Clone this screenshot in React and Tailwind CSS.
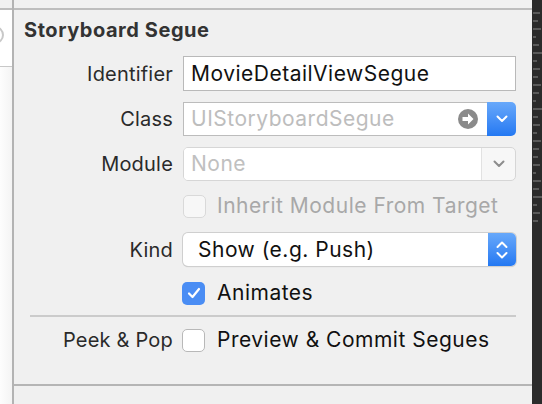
import { useState } from "react";

const font = { fontFamily: "Inter, 'Noto Sans', sans-serif" };

function ChevronDown({ className = "", color = "white" }) {
  return (
    <svg width="12" height="8" viewBox="0 0 12 8" className={className}>
      <path d="M1.5 1.5 L6 6 L10.5 1.5" fill="none" stroke={color} strokeWidth="2" strokeLinecap="round" strokeLinejoin="round" />
    </svg>
  );
}

function UpDown() {
  return (
    <svg width="12" height="20" viewBox="0 0 12 20">
      <path d="M1.5 7 L6 2.5 L10.5 7" fill="none" stroke="white" strokeWidth="2" strokeLinecap="round" strokeLinejoin="round" />
      <path d="M1.5 13 L6 17.5 L10.5 13" fill="none" stroke="white" strokeWidth="2" strokeLinecap="round" strokeLinejoin="round" />
    </svg>
  );
}

function ArrowCircle() {
  return (
    <svg width="20" height="20" viewBox="0 0 20 20">
      <circle cx="10" cy="10" r="10" fill="#8a8a8a" />
      <path d="M4.5 8 H10 V4.5 L15.5 10 L10 15.5 V12 H4.5 Z" fill="white" />
    </svg>
  );
}

function Check() {
  return (
    <svg width="16" height="14" viewBox="0 0 16 14">
      <path d="M3 7.5 L6.5 11 L13 3" fill="none" stroke="white" strokeWidth="2.2" strokeLinecap="round" strokeLinejoin="round" />
    </svg>
  );
}

function Row({ label, children, className = "" }) {
  return (
    <div className={`flex items-center ${className}`}>
      <div className="w-[159px] text-right text-[20px] tracking-[0.2px] text-[#2a2a2a] whitespace-nowrap">{label}</div>
      <div className="ml-[10px] w-[333px]">{children}</div>
    </div>
  );
}

export default function App() {
  const [animates, setAnimates] = useState(true);
  const [peek, setPeek] = useState(false);

  return (
    <div className="flex w-[542px] h-[404px] bg-[#f0f0f0] overflow-hidden" style={font}>
      {/* left edge of neighbouring pane */}
      <div className="w-[12px] flex flex-col">
        <div className="h-[8px] bg-[#f0f0f0]"></div>
        <div className="h-[2px] bg-[#bdbdbd]"></div>
        <div className="h-[56px] bg-white relative overflow-hidden">
          <div className="absolute left-[-14px] top-[16px] w-[18px] h-[18px] rounded-full border-2 border-[#c8c8c8]"></div>
        </div>
        <div className="h-[1px] bg-[#c8c8c8]"></div>
        <div className="flex-1 bg-gradient-to-r from-[#fdfdfd] to-[#f4f4f4]"></div>
      </div>
      <div className="w-[2px] bg-[#b3b3b3]"></div>

      {/* inspector */}
      <div className="w-[518px] flex flex-col">
        <div className="h-[8px]"></div>
        <div className="h-[2px] bg-[#bdbdbd]"></div>

        <div className="pl-[10px] mt-[8px] h-[24px] flex items-center text-[20px] tracking-[0.55px] font-bold text-[#333]">
          Storyboard Segue
        </div>

        <Row label="Identifier" className="mt-[14px]">
          <div className="h-[35px] bg-white border border-[#b9b9b9] flex items-center pl-[7px] text-[21px] tracking-[0.5px] text-[#111]">
            MovieDetailViewSegue
          </div>
        </Row>

        <Row label="Class" className="mt-[11px]">
          <div className="h-[34px] flex">
            <div className="flex-1 bg-white border border-[#bcbcbc] border-r-0 flex items-center pl-[7px] pr-[9px] text-[21px] tracking-[0.5px] text-[#bdbdbd]">
              <span className="flex-1">UIStoryboardSegue</span>
              <ArrowCircle />
            </div>
            <div className="w-[29px] rounded-r-[5px] bg-gradient-to-b from-[#67a8fa] to-[#2378f2] flex items-center justify-center">
              <ChevronDown />
            </div>
          </div>
        </Row>

        <Row label="Module" className="mt-[11px]">
          <div className="h-[34px] flex rounded-[5px] border border-[#d6d6d6] bg-[#f7f7f7] overflow-hidden">
            <div className="w-[298px] bg-white border-r border-[#e2e2e2] flex items-center pl-[7px] text-[21px] tracking-[0.5px] text-[#c0c0c0]">
              None
            </div>
            <div className="flex-1 flex items-center justify-center">
              <ChevronDown color="#8d8d8d" />
            </div>
          </div>
        </Row>

        <Row label="" className="mt-[13px]">
          <div className="flex items-center h-[24px]">
            <div className="w-[23px] h-[23px] rounded-[5px] border border-[#d9d9d9] bg-[#f7f7f7]"></div>
            <span className="ml-[11px] text-[21px] tracking-[0.5px] text-[#a8a8a8]">Inherit Module From Target</span>
          </div>
        </Row>

        <Row label="Kind" className="mt-[15px]">
          <div className="h-[33px] flex rounded-[5px] bg-white shadow-[0_0_0_1px_#cfcfcf,0_1px_1px_rgba(0,0,0,0.2)]">
            <div className="flex-1 flex items-center pl-[15px] text-[21px] tracking-[0.5px] text-[#111]">Show (e.g. Push)</div>
            <div className="w-[28px] rounded-r-[5px] bg-gradient-to-b from-[#67a8fa] to-[#2378f2] flex items-center justify-center">
              <UpDown />
            </div>
          </div>
        </Row>

        <Row label="" className="mt-[15px]">
          <div className="flex items-center h-[24px] -ml-[1px]">
            <button
              onClick={() => setAnimates(!animates)}
              className={`w-[23px] h-[23px] rounded-[5px] flex items-center justify-center ${animates ? "bg-[#4a8df4]" : "bg-white border border-[#b8b8b8]"}`}
            >
              {animates && <Check />}
            </button>
            <span className="ml-[12px] text-[21px] tracking-[0.5px] text-[#111]">Animates</span>
          </div>
        </Row>

        <div className="mt-[10px] ml-[16px] w-[486px] h-[2px] bg-[#cbcbcb]"></div>

        <Row label="Peek & Pop" className="mt-[8px]">
          <div className="flex items-center h-[24px] -ml-[1px]">
            <button
              onClick={() => setPeek(!peek)}
              className={`w-[23px] h-[23px] rounded-[5px] flex items-center justify-center ${peek ? "bg-[#4a8df4]" : "bg-white border border-[#b8b8b8]"}`}
            >
              {peek && <Check />}
            </button>
            <span className="ml-[12px] text-[21px] tracking-[0.5px] text-[#111]">Preview &amp; Commit Segues</span>
          </div>
        </Row>

        <div className="flex-1"></div>
        <div className="h-[2px] bg-[#b5b5b5]"></div>
        <div className="h-[18px]"></div>
      </div>

      {/* editor edge */}
      <div className="w-[10px] bg-[#2b2b2b] flex flex-col gap-[6px] pt-[12px] pl-[1px]">
        {[7, 5, 8, 3, 6, 9, 4, 7, 5, 8, 6, 3, 9, 5, 7, 4, 8, 6, 5, 7, 3, 8, 6, 9, 4, 7, 5].map((w, i) => (
          <div key={i} className="h-[2px] bg-[#5a5a5a]" style={{ width: w }}></div>
        ))}
      </div>
    </div>
  );
}
